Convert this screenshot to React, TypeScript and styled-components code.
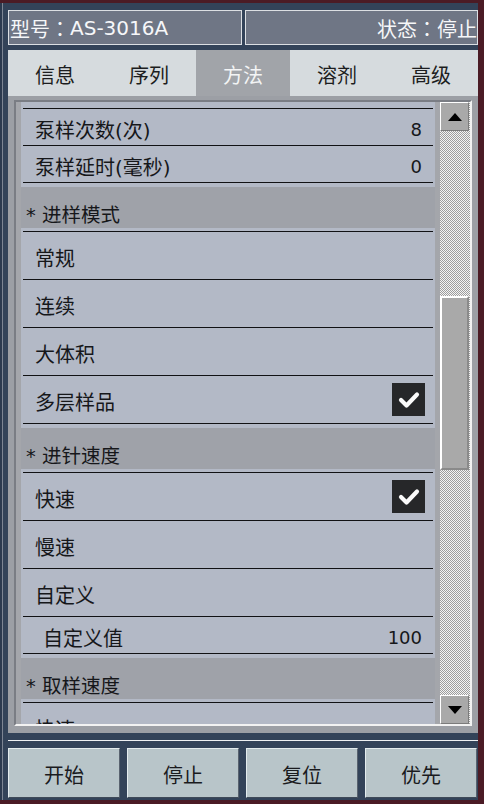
import { FC } from "react";
import styled, { createGlobalStyle } from "styled-components";

const GlobalStyle = createGlobalStyle`
  html, body {
    margin: 0;
    padding: 0;
    background: #4b1b25;
  }
  body {
    font-family: "DejaVu Sans", "Noto Sans CJK SC", sans-serif;
  }
  * {
    box-sizing: border-box;
  }
`;

const Window = styled.div`
  margin-top: 3px;
  width: 478px;
  height: 797px;
  padding: 7px 0 2px 8px;
  background: #334359;
  box-shadow: inset 2px 0 0 #2c3a4f, inset 3px 0 0 #7d8593;
  display: flex;
  flex-direction: column;
`;

const StatusBar = styled.div`
  display: flex;
  gap: 3px;
  width: 470px;
  height: 35px;
`;

const StatusCell = styled.div<{ $right?: boolean }>`
  flex: ${p => (p.$right ? "0 0 233px" : "0 0 234px")};
  display: flex;
  align-items: center;
  justify-content: ${p => (p.$right ? "flex-end" : "flex-start")};
  padding: 1px 0 0 1px;
  border: 1px solid #dcdfe3;
  background: #6f7685;
  color: #f6f7f9;
  font-size: 20px;
  white-space: nowrap;
`;

const Colon = styled.span`
  font-family: "Noto Sans CJK JP", sans-serif;
`;

const Tabs = styled.div`
  margin-top: 5px;
  width: 470px;
  height: 46px;
  display: grid;
  grid-template-columns: repeat(5, 1fr);
  background: #d6dbde;
`;

const Tab = styled.div<{ $active?: boolean }>`
  display: flex;
  align-items: center;
  justify-content: center;
  font-size: 20px;
  padding-top: 2px;
  color: ${p => (p.$active ? "#f3f4f5" : "#1c1d20")};
  background: ${p => (p.$active ? "#a1a4a9" : "transparent")};
`;

const Panel = styled.div`
  width: 470px;
  height: 637px;
  padding: 4px 6px 7px 6px;
  background: #9c9fa5;
`;

const Frame = styled.div`
  height: 100%;
  display: flex;
  border: 2px solid;
  border-color: #7a7d84 #f2f2f2 #f2f2f2 #7a7d84;
`;

const ListArea = styled.div`
  flex: 1;
  overflow: hidden;
  padding: 0 5px;
  background: #a4a6ab;
`;

const Group = styled.div<{ $top?: number }>`
  background: #b3b9c6;
  padding: ${p => p.$top ?? 3}px 2px 4px 2px;
`;

const Row = styled.div<{ $tall?: boolean; $indent?: boolean }>`
  box-sizing: content-box;
  height: ${p => (p.$tall ? 43 : 32)}px;
  display: flex;
  align-items: center;
  justify-content: space-between;
  padding: 4px ${p => (p.$tall ? 8 : 11)}px 0 ${p => (p.$indent ? 20 : 12)}px;
  border-bottom: 1px solid #111214;
  font-size: 20px;
  color: #16171a;

  &:first-child {
    border-top: 1px solid #111214;
  }
`;

const SectionHeader = styled.div`
  height: 41px;
  display: flex;
  align-items: center;
  padding: 11px 0 0 5px;
  background: #9fa2a9;
  font-size: 19.5px;
  color: #16171a;
`;

const Value = styled.span`
  font-size: 18px;
`;

const CheckBox = styled.div`
  width: 33px;
  height: 33px;
  margin-top: -4px;
  display: flex;
  align-items: center;
  justify-content: center;
  background: #262729;
`;

const ScrollBar = styled.div`
  width: 30px;
  display: flex;
  flex-direction: column;
  background: repeating-conic-gradient(#f4f4f4 0 25%, #9d9d9d 0 50%) 0 0 / 2px 2px;
`;

const ArrowButton = styled.div`
  height: 29px;
  width: 29px;
  display: flex;
  align-items: center;
  justify-content: center;
  background: #a9a9a9;
  border: 1px solid;
  border-color: #ffffff #7b7b7b #7b7b7b #ffffff;
`;

const Track = styled.div`
  flex: 1;
  display: flex;
  flex-direction: column;
`;

const Thumb = styled.div`
  width: 29px;
  background: #a9a9a9;
  border: 2px solid;
  border-color: #ffffff #8a8a8a #8a8a8a #ffffff;
`;

const Divider = styled.div`
  width: 470px;
  height: 1px;
  margin-top: 7px;
  background: #eef0f2;
`;

const ButtonBar = styled.div`
  margin-top: 7px;
  width: 469px;
  height: 50px;
  display: grid;
  grid-template-columns: repeat(4, 1fr);
  gap: 7px;
`;

const Button = styled.div`
  display: flex;
  align-items: center;
  justify-content: center;
  padding-top: 3px;
  background: #b8c5c9;
  border: 1px solid;
  border-color: #e4ecee #59636f #3f4a58 #e4ecee;
  font-size: 20px;
  color: #1a1b1e;
`;

const Check: FC = () => (
  <svg width="22" height="18" viewBox="0 0 22 18">
    <polyline points="3,9 8.5,14.5 19,3.5" fill="none" stroke="#fafafa" strokeWidth="4.2" strokeLinecap="round" strokeLinejoin="round" />
  </svg>
);

const Arrow: FC<{ down?: boolean }> = ({ down }) => (
  <svg width="14" height="8" viewBox="0 0 14 8">
    <polygon points={down ? "0,0 14,0 7,8" : "0,8 14,8 7,0"} fill="#000" />
  </svg>
);

type Item = { label: string; value?: string; checked?: boolean; tall?: boolean; indent?: boolean };
type Section = { title?: string; top?: number; items: Item[] };

const sections: Section[] = [
  {
    top: 6,
    items: [
      { label: "泵样次数(次)", value: "8" },
      { label: "泵样延时(毫秒)", value: "0" },
    ],
  },
  {
    title: "* 进样模式",
    items: [
      { label: "常规", tall: true },
      { label: "连续", tall: true },
      { label: "大体积", tall: true },
      { label: "多层样品", tall: true, checked: true },
    ],
  },
  {
    title: "* 进针速度",
    items: [
      { label: "快速", tall: true, checked: true },
      { label: "慢速", tall: true },
      { label: "自定义", tall: true },
      { label: "自定义值", value: "100", indent: true },
    ],
  },
  {
    title: "* 取样速度",
    items: [
      { label: "快速", tall: true },
      { label: "慢速", tall: true },
      { label: "自定义", tall: true },
    ],
  },
];

const tabs = ["信息", "序列", "方法", "溶剂", "高级"];
const actions = ["开始", "停止", "复位", "优先"];

export default function App() {
  return (
    <>
      <GlobalStyle />
      <Window>
        <StatusBar>
          <StatusCell>型号<Colon>：</Colon>AS-3016A</StatusCell>
          <StatusCell $right>状态<Colon>：</Colon>停止</StatusCell>
        </StatusBar>
        <Tabs>
          {tabs.map(t => (
            <Tab key={t} $active={t === "方法"}>{t}</Tab>
          ))}
        </Tabs>
        <Panel>
          <Frame>
            <ListArea>
              {sections.map((s, i) => (
                <div key={i}>
                  {s.title && <SectionHeader>{s.title}</SectionHeader>}
                  <Group $top={s.top}>
                    {s.items.map(item => (
                      <Row key={item.label} $tall={item.tall} $indent={item.indent}>
                        <span>{item.label}</span>
                        {item.value && <Value>{item.value}</Value>}
                        {item.checked && (
                          <CheckBox>
                            <Check />
                          </CheckBox>
                        )}
                      </Row>
                    ))}
                  </Group>
                </div>
              ))}
            </ListArea>
            <ScrollBar>
              <ArrowButton>
                <Arrow />
              </ArrowButton>
              <Track>
                <div style={{ height: 165 }} />
                <Thumb style={{ height: 174 }} />
              </Track>
              <ArrowButton>
                <Arrow down />
              </ArrowButton>
            </ScrollBar>
          </Frame>
        </Panel>
        <Divider />
        <ButtonBar>
          {actions.map(a => (
            <Button key={a}>{a}</Button>
          ))}
        </ButtonBar>
      </Window>
    </>
  );
}
